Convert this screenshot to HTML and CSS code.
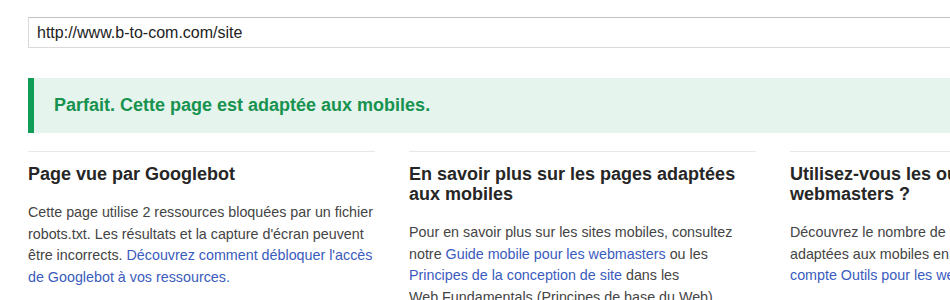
FILE: index.html
```html
<!DOCTYPE html>
<html lang="fr">
<head>
  <meta charset="UTF-8" />
  <title>Test d'optimisation mobile</title>
  <link rel="stylesheet" href="styles.css">
</head>
<body>
  <div class="page">
    <div class="url-box">http://www.b-to-com.com/site</div>

    <div class="verdict">Parfait. Cette page est adaptée aux mobiles.</div>

    <div class="columns">
      <div class="col">
        <h3>Page vue par Googlebot</h3>
        <p>Cette page utilise 2 ressources bloquées par un fichier robots.txt. Les résultats et la capture d'écran peuvent être incorrects. <a href="#">Découvrez comment débloquer l'accès de Googlebot à vos ressources.</a></p>
      </div>
      <div class="col">
        <h3>En savoir plus sur les pages adaptées aux mobiles</h3>
        <p>Pour en savoir plus sur les sites mobiles, consultez notre <a href="#">Guide mobile pour les webmasters</a> ou les <a href="#">Principes de la conception de site</a> dans les Web&nbsp;Fundamentals (Principes de base du Web).</p>
      </div>
      <div class="col">
        <h3>Utilisez-vous les outils pour les webmasters ?</h3>
        <p>Découvrez le nombre de pages de votre site non adaptées aux mobiles en vous connectant à votre <a href="#">compte Outils pour les webmasters</a>.</p>
      </div>
    </div>
  </div>
</body>
</html>
```

FILE: styles.css
```css
body {
  margin: 0;
  background: #fff;
  font-family: "Liberation Sans", Arial, sans-serif;
  color: #444;
  overflow: hidden;
}
.page {
  width: 1109px;
  padding: 17px 0 0 28px;
}
.url-box {
  height: 29px;
  line-height: 29px;
  padding: 0 8px;
  border: 1px solid #d9d9d9;
  border-top-color: #c0c0c0;
  font-size: 16px;
  color: #222;
}
.verdict {
  margin-top: 30px;
  height: 55px;
  line-height: 55px;
  padding-left: 20px;
  border-left: 6px solid #0f9d58;
  background: #e5f4ed;
  color: #17924f;
  font-size: 18px;
  font-weight: bold;
}
.columns {
  display: grid;
  grid-template-columns: repeat(3, 347px);
  column-gap: 34px;
  margin-top: 18px;
}
.col {
  border-top: 1px solid #e8e8e8;
}
.col h3 {
  margin: 12px 0 0;
  font-size: 18px;
  line-height: 20px;
  color: #262626;
}
.col p {
  margin: 18px 0 0;
  font-size: 14.3px;
  line-height: 21.5px;
}
a {
  color: #3a5bbd;
  text-decoration: none;
}
```
